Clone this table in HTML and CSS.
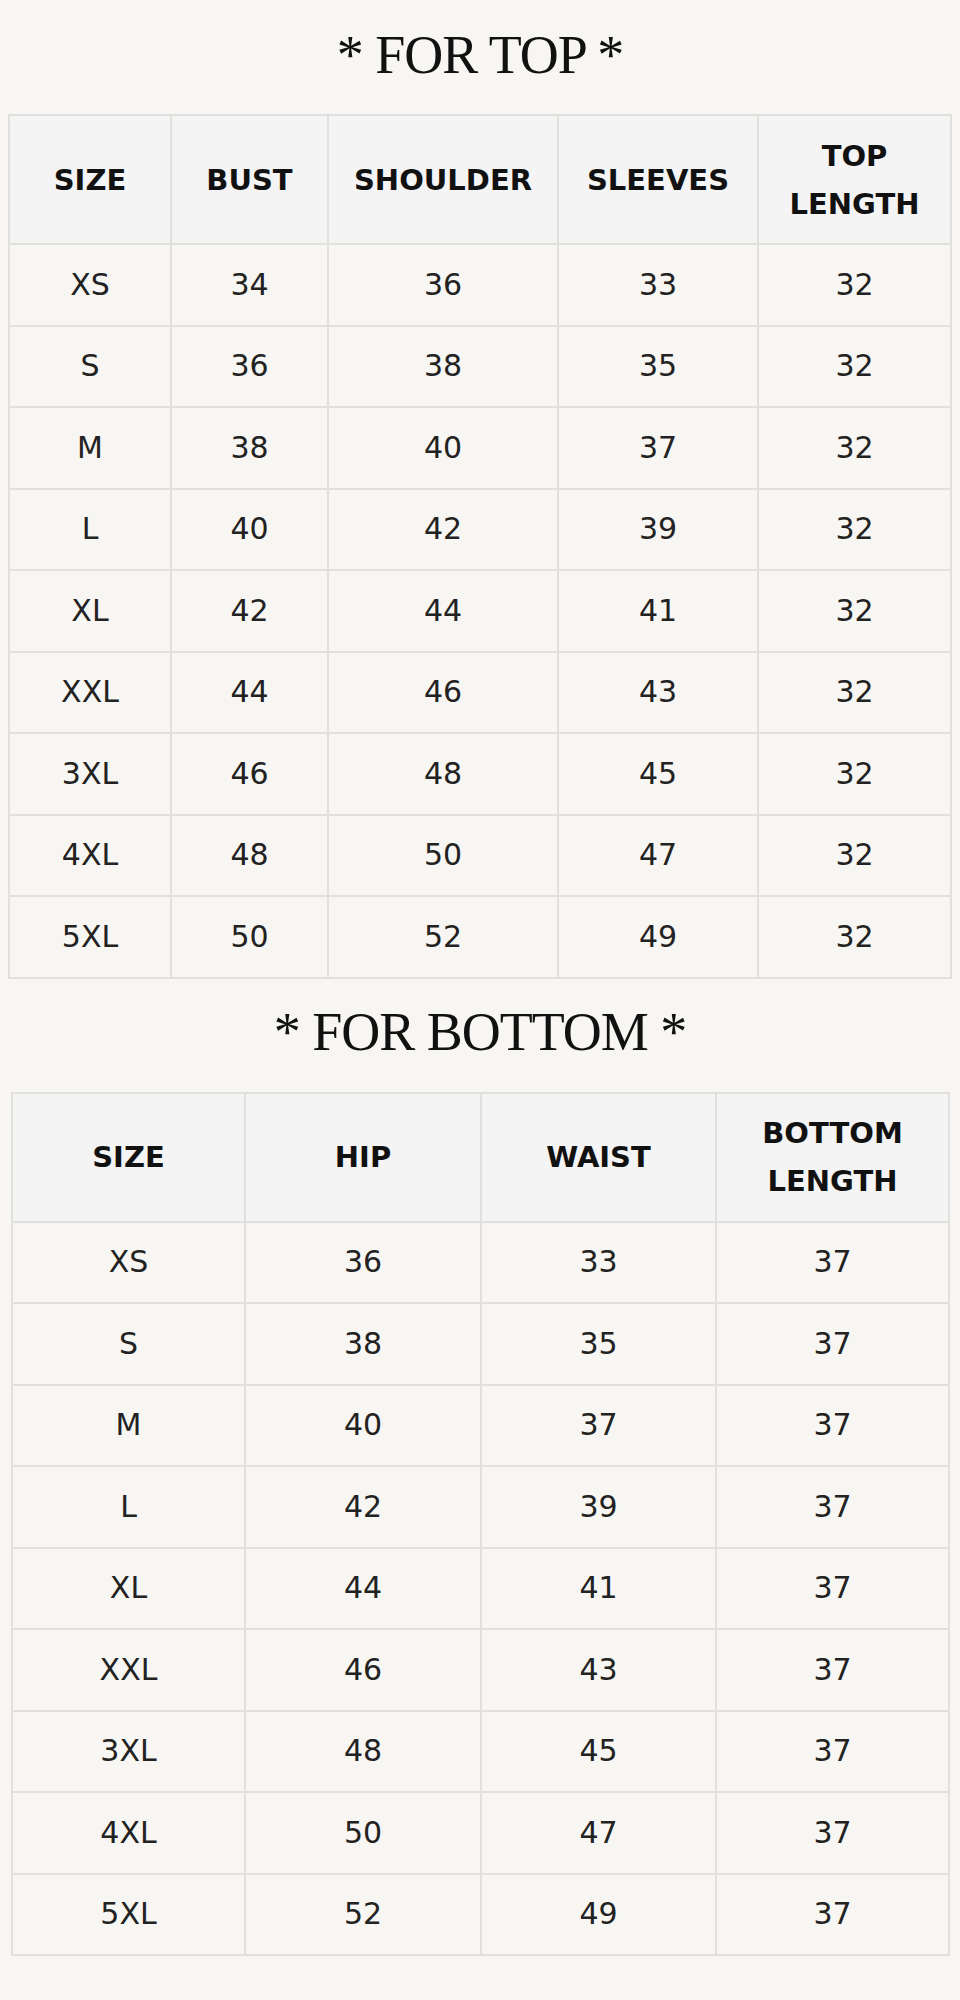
FILE: index.html
```html
<!DOCTYPE html>
<html lang="en">
<head>
<meta charset="utf-8">
<title>Size Chart</title>
<link rel="stylesheet" href="styles.css">
</head>
<body>
<h2 class="chart-title chart-title--first">* FOR TOP *</h2>
<table class="size-table size-table--top">
  <colgroup>
    <col class="c-top-1"><col class="c-top-2"><col class="c-top-3"><col class="c-top-4"><col class="c-top-5">
  </colgroup>
  <thead>
    <tr><th>SIZE</th><th>BUST</th><th>SHOULDER</th><th>SLEEVES</th><th>TOP<br>LENGTH</th></tr>
  </thead>
  <tbody>
    <tr><td>XS</td><td>34</td><td>36</td><td>33</td><td>32</td></tr>
    <tr><td>S</td><td>36</td><td>38</td><td>35</td><td>32</td></tr>
    <tr><td>M</td><td>38</td><td>40</td><td>37</td><td>32</td></tr>
    <tr><td>L</td><td>40</td><td>42</td><td>39</td><td>32</td></tr>
    <tr><td>XL</td><td>42</td><td>44</td><td>41</td><td>32</td></tr>
    <tr><td>XXL</td><td>44</td><td>46</td><td>43</td><td>32</td></tr>
    <tr><td>3XL</td><td>46</td><td>48</td><td>45</td><td>32</td></tr>
    <tr><td>4XL</td><td>48</td><td>50</td><td>47</td><td>32</td></tr>
    <tr><td>5XL</td><td>50</td><td>52</td><td>49</td><td>32</td></tr>
  </tbody>
</table>
<h2 class="chart-title">* FOR BOTTOM *</h2>
<table class="size-table size-table--bottom">
  <colgroup>
    <col class="c-bot-1"><col class="c-bot-2"><col class="c-bot-3"><col class="c-bot-4">
  </colgroup>
  <thead>
    <tr><th>SIZE</th><th>HIP</th><th>WAIST</th><th>BOTTOM<br>LENGTH</th></tr>
  </thead>
  <tbody>
    <tr><td>XS</td><td>36</td><td>33</td><td>37</td></tr>
    <tr><td>S</td><td>38</td><td>35</td><td>37</td></tr>
    <tr><td>M</td><td>40</td><td>37</td><td>37</td></tr>
    <tr><td>L</td><td>42</td><td>39</td><td>37</td></tr>
    <tr><td>XL</td><td>44</td><td>41</td><td>37</td></tr>
    <tr><td>XXL</td><td>46</td><td>43</td><td>37</td></tr>
    <tr><td>3XL</td><td>48</td><td>45</td><td>37</td></tr>
    <tr><td>4XL</td><td>50</td><td>47</td><td>37</td></tr>
    <tr><td>5XL</td><td>52</td><td>49</td><td>37</td></tr>
  </tbody>
</table>
</body>
</html>
```
FILE: styles.css
```css
html, body {
  background: #f8f6f2;
}
body {
  margin: 8px;
  color: #222;
  font-family: "DejaVu Sans", "Noto Sans", sans-serif;
}
.chart-title {
  margin: 21px 0 27px;
  font-family: "Liberation Serif", "Times New Roman", serif;
  font-weight: 400;
  font-size: 54px;
  line-height: 65px;
  letter-spacing: -1px;
  text-align: center;
  color: #111;
}
.chart-title--first {
  margin-top: 15px;
  margin-bottom: 26px;
}
.size-table {
  border-collapse: collapse;
  table-layout: fixed;
  border: 2px solid #e1e0de;
}
.size-table--top {
  width: 942px;
}
.size-table--bottom {
  width: 937px;
  margin-left: 3px;
}
.c-top-1 { width: 162px; }
.c-top-2 { width: 157px; }
.c-top-3 { width: 230px; }
.c-top-4 { width: 200px; }
.c-top-5 { width: 193px; }
.c-bot-1 { width: 233px; }
.c-bot-2 { width: 236px; }
.c-bot-3 { width: 235px; }
.c-bot-4 { width: 233px; }
.size-table th,
.size-table td {
  border: 2px solid #e1e0de;
  padding: 0;
  text-align: center;
  vertical-align: middle;
}
.size-table th {
  height: 127px;
  background: #f4f4f4;
  font-weight: 700;
  font-size: 29px;
  line-height: 48px;
  color: #111;
}
.size-table td {
  height: 79.5px;
  font-weight: 400;
  font-size: 30px;
  line-height: 36px;
  color: #222;
}
```
